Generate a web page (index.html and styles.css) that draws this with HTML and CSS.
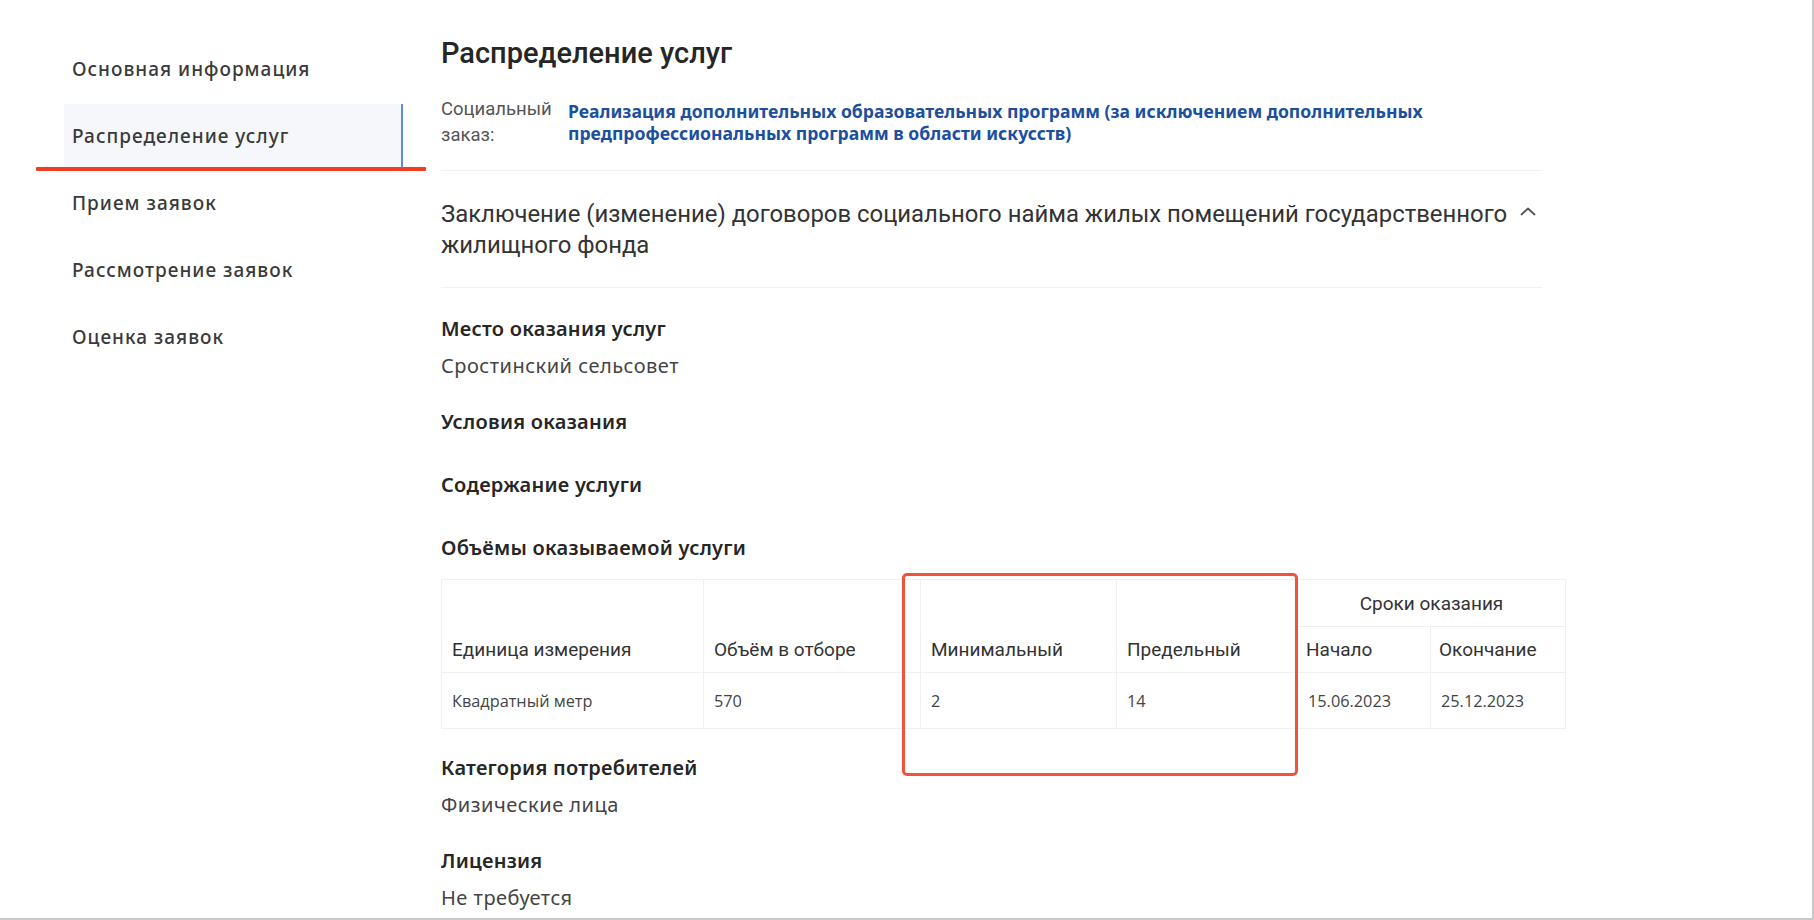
FILE: index.html
```html
<!DOCTYPE html>
<html lang="ru">
<head>
<meta charset="utf-8">
<title>Распределение услуг</title>
<link rel="stylesheet" href="styles.css">
</head>
<body>
<div class="page">
  <nav class="sidebar">
    <div class="nav-item">Основная информация</div>
    <div class="nav-item active">Распределение услуг</div>
    <div class="nav-item">Прием заявок</div>
    <div class="nav-item">Рассмотрение заявок</div>
    <div class="nav-item">Оценка заявок</div>
    <div class="mark-line"></div>
  </nav>
  <main class="main">
    <h1 class="title">Распределение услуг</h1>
    <div class="order">
      <div class="order-label">Социальный<br>заказ:</div>
      <a class="order-link">Реализация дополнительных образовательных программ (за исключением дополнительных<br>предпрофессиональных программ в области искусств)</a>
    </div>
    <div class="service">
      <div class="service-name">Заключение (изменение) договоров социального найма жилых помещений государственного<br>жилищного фонда</div>
      <svg class="chevron" width="16" height="9" viewBox="0 0 16 9"><path d="M1.5 7.5 L8 1.5 L14.5 7.5" fill="none" stroke="#555" stroke-width="1.8" stroke-linecap="round" stroke-linejoin="round"/></svg>
    </div>
    <section class="field">
      <div class="field-label">Место оказания услуг</div>
      <div class="field-value">Сростинский сельсовет</div>
    </section>
    <section class="field empty">
      <div class="field-label">Условия оказания</div>
    </section>
    <section class="field empty">
      <div class="field-label">Содержание услуги</div>
    </section>
    <section class="field">
      <div class="field-label">Объёмы оказываемой услуги</div>
      <div class="table-wrap">
        <table class="vol">
          <colgroup>
            <col class="c1"><col class="c2"><col class="c3"><col class="c4"><col class="c5"><col class="c6">
          </colgroup>
          <thead>
            <tr class="hr1">
              <th rowspan="2">Единица измерения</th>
              <th rowspan="2">Объём в отборе</th>
              <th rowspan="2">Минимальный</th>
              <th rowspan="2">Предельный</th>
              <th colspan="2" class="center">Сроки оказания</th>
            </tr>
            <tr class="hr2">
              <th>Начало</th>
              <th>Окончание</th>
            </tr>
          </thead>
          <tbody>
            <tr>
              <td>Квадратный метр</td>
              <td>570</td>
              <td>2</td>
              <td>14</td>
              <td>15.06.2023</td>
              <td>25.12.2023</td>
            </tr>
          </tbody>
        </table>
        <div class="highlight"></div>
      </div>
    </section>
    <section class="field">
      <div class="field-label">Категория потребителей</div>
      <div class="field-value">Физические лица</div>
    </section>
    <section class="field">
      <div class="field-label">Лицензия</div>
      <div class="field-value">Не требуется</div>
    </section>
  </main>
</div>
</body>
</html>
```
FILE: styles.css
```css
* { box-sizing: border-box; }
html, body { margin: 0; padding: 0; background: #fff; }
body { width: 1814px; height: 920px; overflow: hidden; font-family: "Noto Sans", sans-serif; color: #333; }

.page {
  display: flex;
  width: 1814px;
  height: 920px;
  border-right: 2px solid #c9c9c9;
  border-bottom: 2px solid #c9c9c9;
}

.sidebar {
  position: relative;
  width: 403px;
  flex: none;
  padding: 37px 0 0 64px;
  display: flex;
  flex-direction: column;
  gap: 3px;
}
.nav-item {
  height: 64px;
  display: flex;
  align-items: center;
  padding-left: 8px;
  font-family: "Noto Sans", sans-serif;
  font-size: 19px;
  font-weight: 500;
  color: #3a3a3a;
  letter-spacing: 1px;
}
.nav-item.active {
  background: #f5f7fa;
  border-right: 2px solid #5b8fd6;
}
.mark-line {
  position: absolute;
  left: 36px;
  top: 167px;
  width: 390px;
  height: 4px;
  background: #f23c1f;
  border-radius: 1px;
}

.main {
  flex: 1;
  padding: 35px 0 0 38px;
  font-family: Roboto, sans-serif;
}
.title {
  margin: 0;
  font-family: Roboto, sans-serif;
  font-weight: 500;
  font-size: 29px;
  line-height: 36px;
  color: #262626;
}
.order {
  display: flex;
  gap: 14px;
  margin-top: 25px;
  width: 1101px;
  padding-bottom: 22px;
  border-bottom: 1px solid #f1f1f1;
}
.order-label {
  width: 113px;
  flex: none;
  font-family: Roboto, sans-serif;
  font-size: 18.5px;
  line-height: 26px;
  color: #555;
}
.order-link {
  font-family: "Noto Sans", sans-serif;
  font-weight: 700;
  font-size: 17.6px;
  line-height: 22px;
  color: #1c4f9e;
  text-decoration: none;
  margin-top: 4px;
}
.service {
  width: 1101px;
  display: flex;
  align-items: flex-start;
  justify-content: space-between;
  padding: 28px 0 26px;
  border-bottom: 1px solid #f1f1f1;
}
.service-name {
  font-family: Roboto, sans-serif;
  font-size: 23.9px;
  line-height: 31px;
  color: #333;
  white-space: nowrap;
}
.chevron { margin-top: 8px; margin-right: 6px; flex: none; }

.field { margin-top: 26px; }
.field + .field { margin-top: 0; }
.field-label {
  font-family: "Noto Sans", sans-serif;
  font-weight: 600;
  font-size: 20px;
  letter-spacing: 0.25px;
  line-height: 30px;
  color: #262626;
}
.field-value {
  font-family: "Noto Sans", sans-serif;
  font-size: 20px;
  letter-spacing: 0.5px;
  line-height: 30px;
  color: #444;
  margin-top: 7px;
  margin-bottom: 26px;
}
.field.empty { margin-bottom: 33px; }

.table-wrap {
  position: relative;
  margin-top: 16px;
  margin-bottom: 24px;
}
.vol {
  border-collapse: collapse;
  table-layout: fixed;
  width: 1124px;
}
.c1 { width: 262px; }
.c2 { width: 217px; }
.c3 { width: 196px; }
.c4 { width: 181px; }
.c5 { width: 133px; }
.c6 { width: 135px; }
.vol th, .vol td {
  border: 1px solid #f0f0f0;
  text-align: left;
  padding: 0 10px;
  vertical-align: middle;
  white-space: nowrap;
}
.vol th {
  font-family: Roboto, sans-serif;
  font-weight: 400;
  font-size: 19px;
  color: #333;
}
.vol thead th[rowspan] { vertical-align: bottom; padding-bottom: 11px; }
.vol .hr1 { height: 47px; }
.vol .hr2 { height: 46px; }
.vol .hr2 th { padding-left: 8px; }
.vol th.center { text-align: center; }
.vol td {
  height: 56px;
  font-family: "Open Sans", sans-serif;
  font-size: 16.3px;
  color: #444;
}
.highlight {
  position: absolute;
  left: 461px;
  top: -6px;
  width: 396px;
  height: 203px;
  border: 3px solid #f0523a;
  border-radius: 5px;
  pointer-events: none;
}
```
